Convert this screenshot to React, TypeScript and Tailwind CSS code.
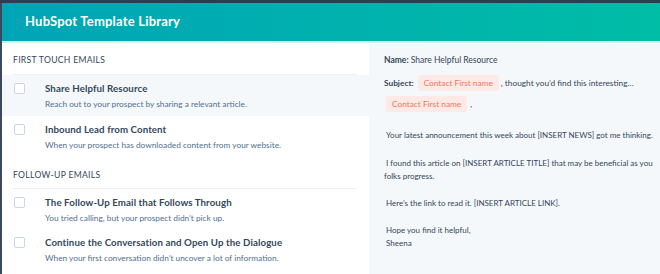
import React from "react";

const Check = () => (
  <div className="w-[11px] h-[11px] shrink-0 rounded-[2px] border border-[#cbd6e2] bg-white mt-[1px]" />
);

const Row = ({ title, desc, active, h }: { title: string; desc: string; active?: boolean; h: string }) => (
  <div className={`flex ${h} pl-[12px] pt-[7px] ${active ? "bg-[#f5f8fa]" : ""}`}>
    <Check />
    <div className="ml-[20px] flex flex-col">
      <div className="text-[9.7px] leading-[13px] font-bold text-[#33475b] tracking-[0.1px]">{title}</div>
      <div className="mt-[3px] text-[8.3px] leading-[12px] text-[#516f90]">{desc}</div>
    </div>
  </div>
);

const Heading = ({ text, pad }: { text: string; pad: string }) => (
  <div className={`ml-[11px] mr-[12px] ${pad} border-b border-[#eaf0f6] text-[8.6px] leading-[12px] text-[#33475b] tracking-[0.3px]`}>
    {text}
  </div>
);

const Pill = () => (
  <span className="inline-flex items-center h-[16px] px-[6px] rounded-[2px] bg-[#fde9e5] text-[#f3735f] text-[8.3px]">
    Contact First name
  </span>
);

export default function App() {
  return (
    <div
      className="w-[660px] h-[274px] flex flex-col bg-white overflow-hidden"
      style={{ fontFamily: "Lato, 'Open Sans', sans-serif" }}
    >
      <div className="h-[3px] bg-[#2f3e4f] shrink-0" />
      <div className="flex flex-1 min-h-0">
        <div className="w-[2px] bg-[#3b4a5b] shrink-0" />
        <div className="flex-1 flex flex-col min-w-0">
          <div className="h-[38px] shrink-0 bg-gradient-to-r from-[#00a4b6] to-[#00bda6] flex items-center pl-[23px]">
            <span className="text-white font-bold text-[13px] tracking-[0.2px]">HubSpot Template Library</span>
          </div>
          <div className="h-[2px] bg-[#d3eff1] shrink-0" />
          <div className="flex flex-1 min-h-0">
            <div className="w-[367px] shrink-0 flex flex-col">
              <Heading text="FIRST TOUCH EMAILS" pad="pt-[11px] pb-[8px]" />
              <Row h="h-[41px]" active title="Share Helpful Resource" desc="Reach out to your prospect by sharing a relevant article." />
              <Row h="h-[41px]" title="Inbound Lead from Content" desc="When your prospect has downloaded content from your website." />
              <Heading text="FOLLOW-UP EMAILS" pad="pt-[12px] pb-[7px]" />
              <Row h="h-[40px]" title="The Follow-Up Email that Follows Through" desc="You tried calling, but your prospect didn’t pick up." />
              <Row h="h-[40px]" title="Continue the Conversation and Open Up the Dialogue" desc="When your first conversation didn’t uncover a lot of information." />
            </div>
            <div className="flex-1 bg-[#f5f8fa] mt-[1px] pl-[15px] pt-[10px] text-[8px] text-[#33475b] whitespace-nowrap">
              <div className="leading-[12px] text-[8.5px]">
                <span className="font-bold">Name:</span> Share Helpful Resource
              </div>
              <div className="mt-[9px] flex items-center h-[16px] text-[8.3px]">
                <span className="font-bold">Subject:</span>
                <span className="ml-[4px] flex"><Pill /></span>
                <span className="ml-[2px]">, thought you’d find this interesting…</span>
              </div>
              <div className="mt-[5px] flex items-center h-[16px] pl-[2px]">
                <Pill />
                <span className="ml-[3px]">,</span>
              </div>
              <div className="mt-[17px] leading-[13px] pl-[2px]">
                Your latest announcement this week about [INSERT NEWS] got me thinking.
              </div>
              <div className="mt-[15px] leading-[13px]">
                <div className="pl-[2px]">I found this article on [INSERT ARTICLE TITLE] that may be beneficial as you</div>
                <div>folks progress.</div>
              </div>
              <div className="mt-[14px] leading-[13px] pl-[2px]">Here’s the link to read it. [INSERT ARTICLE LINK].</div>
              <div className="mt-[14px] leading-[12.5px] pl-[2px]">
                <div>Hope you find it helpful,</div>
                <div>Sheena</div>
              </div>
            </div>
          </div>
        </div>
      </div>
    </div>
  );
}
